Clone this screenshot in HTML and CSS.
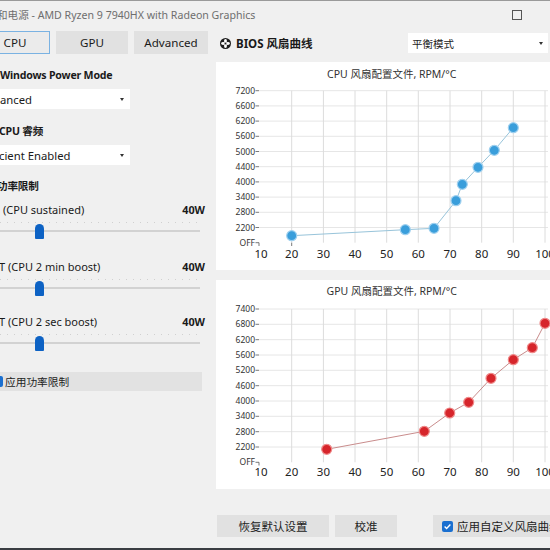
FILE: index.html
```
<!DOCTYPE html>
<html lang="zh">
<head>
<meta charset="utf-8">
<title>Fan</title>
<link rel="stylesheet" href="styles.css">
</head>
<body>
<div class="titlebar">
  <span class="title-text">和电源 - AMD Ryzen 9 7940HX with Radeon Graphics</span>
  <span class="max-icon"></span>
</div>
<div class="main">
  <div class="left">
    <div class="tabs">
      <div class="tab tab-cpu">CPU</div>
      <div class="tab tab-gpu">GPU</div>
      <div class="tab tab-adv">Advanced</div>
    </div>
    <div class="section-title st1">Windows Power Mode</div>
    <div class="select sel1"><span>anced</span><i class="caret"></i></div>
    <div class="section-title st2">CPU 睿频</div>
    <div class="select sel2"><span>cient Enabled</span><i class="caret"></i></div>
    <div class="section-title st3">功率限制</div>
    <div class="limit l1"><span class="lname">(CPU sustained)</span><span class="lval">40W</span></div>
    <div class="slider"><div class="ticks"></div><div class="track"></div><div class="thumb"></div></div>
    <div class="limit l2"><span class="lname">T (CPU 2 min boost)</span><span class="lval">40W</span></div>
    <div class="slider"><div class="ticks"></div><div class="track"></div><div class="thumb"></div></div>
    <div class="limit l3"><span class="lname">T (CPU 2 sec boost)</span><span class="lval">40W</span></div>
    <div class="slider"><div class="ticks"></div><div class="track"></div><div class="thumb"></div></div>
    <div class="apply-row"><span class="cb cb-clip"></span><span>应用功率限制</span></div>
  </div>
  <div class="right">
    <div class="header">
      <svg class="fan-icon" width="11" height="11" viewBox="0 0 12 12">
        <circle cx="6" cy="6" r="6" fill="#1e1e1e"/>
        <g fill="#fff">
          <ellipse cx="6" cy="3.4" rx="1.6" ry="2.2"/>
          <ellipse cx="6" cy="8.6" rx="1.6" ry="2.2"/>
          <ellipse cx="3.4" cy="6" rx="2.2" ry="1.6"/>
          <ellipse cx="8.6" cy="6" rx="2.2" ry="1.6"/>
        </g>
        <circle cx="6" cy="6" r="1.1" fill="#1e1e1e"/>
      </svg>
      <span class="bios-title">BIOS 风扇曲线</span>
      <div class="select mode-select"><span>平衡模式</span><i class="caret"></i></div>
    </div>
    <div class="panel panel-cpu">
      <svg class="chart" width="334" height="208" viewBox="216 62 334 208">
        <text class="ctitle" x="391.7" y="78" text-anchor="middle">CPU 风扇配置文件, RPM/°C</text>
        <g class="hgrid">
          <line x1="259" x2="548" y1="90.7" y2="90.7"/>
          <line x1="259" x2="548" y1="105.9" y2="105.9"/>
          <line x1="259" x2="548" y1="121.1" y2="121.1"/>
          <line x1="259" x2="548" y1="136.3" y2="136.3"/>
          <line x1="259" x2="548" y1="151.5" y2="151.5"/>
          <line x1="259" x2="548" y1="166.7" y2="166.7"/>
          <line x1="259" x2="548" y1="181.9" y2="181.9"/>
          <line x1="259" x2="548" y1="197.1" y2="197.1"/>
          <line x1="259" x2="548" y1="212.3" y2="212.3"/>
          <line x1="259" x2="548" y1="227.5" y2="227.5"/>
        </g>
        <g class="vgrid">
          <line x1="291.7" x2="291.7" y1="90.7" y2="242.7"/>
          <line x1="323.4" x2="323.4" y1="90.7" y2="242.7"/>
          <line x1="355" x2="355" y1="90.7" y2="242.7"/>
          <line x1="386.7" x2="386.7" y1="90.7" y2="242.7"/>
          <line x1="418.3" x2="418.3" y1="90.7" y2="242.7"/>
          <line x1="450" x2="450" y1="90.7" y2="242.7"/>
          <line x1="481.7" x2="481.7" y1="90.7" y2="242.7"/>
          <line x1="513.3" x2="513.3" y1="90.7" y2="242.7"/>
          <line x1="545" x2="545" y1="90.7" y2="242.7"/>
        </g>
        <g class="ticks-y">
          <line x1="255.5" x2="259" y1="90.7" y2="90.7"/>
          <line x1="255.5" x2="259" y1="105.9" y2="105.9"/>
          <line x1="255.5" x2="259" y1="121.1" y2="121.1"/>
          <line x1="255.5" x2="259" y1="136.3" y2="136.3"/>
          <line x1="255.5" x2="259" y1="151.5" y2="151.5"/>
          <line x1="255.5" x2="259" y1="166.7" y2="166.7"/>
          <line x1="255.5" x2="259" y1="181.9" y2="181.9"/>
          <line x1="255.5" x2="259" y1="197.1" y2="197.1"/>
          <line x1="255.5" x2="259" y1="212.3" y2="212.3"/>
          <line x1="255.5" x2="259" y1="227.5" y2="227.5"/>
          <line x1="255.5" x2="259" y1="242.7" y2="242.7"/>
          <line x1="259" x2="259" y1="242.7" y2="246"/>
          <line x1="291.7" x2="291.7" y1="242.7" y2="246"/>
        </g>
        <g class="ylab" text-anchor="end">
          <text x="255" y="93.7">7200</text>
          <text x="255" y="108.9">6600</text>
          <text x="255" y="124.1">6200</text>
          <text x="255" y="139.3">5600</text>
          <text x="255" y="154.5">5000</text>
          <text x="255" y="169.7">4400</text>
          <text x="255" y="184.9">4000</text>
          <text x="255" y="200.1">3400</text>
          <text x="255" y="215.3">2800</text>
          <text x="255" y="230.5">2200</text>
          <text x="255" y="245.7">OFF</text>
        </g>
        <g class="xlab" text-anchor="middle">
          <text x="261" y="257.5">10</text>
          <text x="291.7" y="257.5">20</text>
          <text x="323.4" y="257.5">30</text>
          <text x="355" y="257.5">40</text>
          <text x="386.7" y="257.5">50</text>
          <text x="418.3" y="257.5">60</text>
          <text x="450" y="257.5">70</text>
          <text x="481.7" y="257.5">80</text>
          <text x="513.3" y="257.5">90</text>
          <text x="545" y="257.5">100</text>
        </g>
        <polyline class="line-cpu" points="291.7,235.7 405.3,229.7 434,228.3 456,200.7 462.3,184.3 478,167.3 494.3,150.3 513.3,127.7"/>
        <g class="pt-cpu">
          <circle cx="291.7" cy="235.7" r="5"/>
          <circle cx="405.3" cy="229.7" r="5"/>
          <circle cx="434" cy="228.3" r="5"/>
          <circle cx="456" cy="200.7" r="5"/>
          <circle cx="462.3" cy="184.3" r="5"/>
          <circle cx="478" cy="167.3" r="5"/>
          <circle cx="494.3" cy="150.3" r="5"/>
          <circle cx="513.3" cy="127.7" r="5"/>
        </g>
      </svg>
    </div>
    <div class="panel panel-gpu">
      <svg class="chart" width="334" height="209" viewBox="216 280 334 209">
        <text class="ctitle" x="391.7" y="295" text-anchor="middle">GPU 风扇配置文件, RPM/°C</text>
        <g class="hgrid">
          <line x1="259" x2="548" y1="309" y2="309"/>
          <line x1="259" x2="548" y1="324.3" y2="324.3"/>
          <line x1="259" x2="548" y1="339.7" y2="339.7"/>
          <line x1="259" x2="548" y1="355" y2="355"/>
          <line x1="259" x2="548" y1="370.3" y2="370.3"/>
          <line x1="259" x2="548" y1="385.7" y2="385.7"/>
          <line x1="259" x2="548" y1="401" y2="401"/>
          <line x1="259" x2="548" y1="416.3" y2="416.3"/>
          <line x1="259" x2="548" y1="431.7" y2="431.7"/>
          <line x1="259" x2="548" y1="447" y2="447"/>
        </g>
        <g class="vgrid">
          <line x1="291.7" x2="291.7" y1="309" y2="462.3"/>
          <line x1="323.4" x2="323.4" y1="309" y2="462.3"/>
          <line x1="355" x2="355" y1="309" y2="462.3"/>
          <line x1="386.7" x2="386.7" y1="309" y2="462.3"/>
          <line x1="418.3" x2="418.3" y1="309" y2="462.3"/>
          <line x1="450" x2="450" y1="309" y2="462.3"/>
          <line x1="481.7" x2="481.7" y1="309" y2="462.3"/>
          <line x1="513.3" x2="513.3" y1="309" y2="462.3"/>
          <line x1="545" x2="545" y1="309" y2="462.3"/>
        </g>
        <g class="ticks-y">
          <line x1="255.5" x2="259" y1="309" y2="309"/>
          <line x1="255.5" x2="259" y1="324.3" y2="324.3"/>
          <line x1="255.5" x2="259" y1="339.7" y2="339.7"/>
          <line x1="255.5" x2="259" y1="355" y2="355"/>
          <line x1="255.5" x2="259" y1="370.3" y2="370.3"/>
          <line x1="255.5" x2="259" y1="385.7" y2="385.7"/>
          <line x1="255.5" x2="259" y1="401" y2="401"/>
          <line x1="255.5" x2="259" y1="416.3" y2="416.3"/>
          <line x1="255.5" x2="259" y1="431.7" y2="431.7"/>
          <line x1="255.5" x2="259" y1="447" y2="447"/>
          <line x1="255.5" x2="259" y1="462.3" y2="462.3"/>
          <line x1="259" x2="259" y1="462.3" y2="465.5"/>
        </g>
        <g class="ylab" text-anchor="end">
          <text x="255" y="312">7400</text>
          <text x="255" y="327.3">6800</text>
          <text x="255" y="342.7">6200</text>
          <text x="255" y="358">5600</text>
          <text x="255" y="373.3">5200</text>
          <text x="255" y="388.7">4600</text>
          <text x="255" y="404">4000</text>
          <text x="255" y="419.3">3400</text>
          <text x="255" y="434.7">2800</text>
          <text x="255" y="450">2200</text>
          <text x="255" y="465.3">OFF</text>
        </g>
        <g class="xlab" text-anchor="middle">
          <text x="261" y="476">10</text>
          <text x="291.7" y="476">20</text>
          <text x="323.4" y="476">30</text>
          <text x="355" y="476">40</text>
          <text x="386.7" y="476">50</text>
          <text x="418.3" y="476">60</text>
          <text x="450" y="476">70</text>
          <text x="481.7" y="476">80</text>
          <text x="513.3" y="476">90</text>
          <text x="545" y="476">100</text>
        </g>
        <polyline class="line-gpu" points="326.7,449.3 424.3,431.3 449.7,413 468.7,402.3 491,378.3 513.3,359.7 532.3,347.7 545,323.3"/>
        <g class="pt-gpu">
          <circle cx="326.7" cy="449.3" r="5"/>
          <circle cx="424.3" cy="431.3" r="5"/>
          <circle cx="449.7" cy="413" r="5"/>
          <circle cx="468.7" cy="402.3" r="5"/>
          <circle cx="491" cy="378.3" r="5"/>
          <circle cx="513.3" cy="359.7" r="5"/>
          <circle cx="532.3" cy="347.7" r="5"/>
          <circle cx="545" cy="323.3" r="5"/>
        </g>
      </svg>
    </div>
    <div class="actions">
      <div class="btn btn-reset">恢复默认设置</div>
      <div class="btn btn-cal">校准</div>
      <div class="btn btn-apply">
        <span class="cb"><svg width="11" height="11" viewBox="0 0 11 11"><path d="M2.6 5.6 L4.6 7.5 L8.4 3.6" fill="none" stroke="#fff" stroke-width="1.4"/></svg></span>
        <span>应用自定义风扇曲线</span>
      </div>
    </div>
  </div>
</div>
</body>
</html>
```
FILE: styles.css
```
* { box-sizing: border-box; }
html, body { margin: 0; padding: 0; }
body {
  width: 550px;
  height: 550px;
  overflow: hidden;
  background: #f0f0f0;
  font-family: "Noto Sans", "Noto Sans CJK SC", sans-serif;
  color: #1a1a1a;
  border-top: 1px solid #9a9a9a;
  border-bottom: 2px solid #3a3d42;
}
.titlebar {
  height: 27px;
  display: flex;
  align-items: center;
  justify-content: space-between;
  padding-right: 28px;
  font-size: 10.6px;
  color: #6e6e6e;
}
.title-text { margin-left: -3px; white-space: nowrap; }
.max-icon {
  width: 10px;
  height: 10px;
  border: 1px solid #555;
}
.main { display: flex; gap: 8px; }
.left {
  width: 208px;
  padding-top: 3px;
  display: flex;
  flex-direction: column;
  flex-shrink: 0;
}
.tabs { display: flex; gap: 6px; height: 23px; }
.tab {
  background: #e1e1e1;
  font-size: 11.6px;
  display: flex;
  align-items: center;
  justify-content: center;
  color: #1a1a1a;
}
.tab-cpu {
  width: 70px;
  margin-left: -20px;
  border: 1px solid #7ab2e2;
  background: #ebebeb;
}
.tab-gpu { width: 72px; }
.tab-adv { width: 74px; }
.section-title {
  font-weight: bold;
  font-size: 10.6px;
  letter-spacing: -0.2px;
  line-height: 16px;
  white-space: nowrap;
}
.st1 { margin-top: 13px; }
.st2 { margin-top: 14px; margin-left: -1px; }
.st3 { margin-top: 13px; margin-left: -3px; }
.select {
  height: 20px;
  width: 130px;
  background: #fff;
  display: flex;
  align-items: center;
  justify-content: space-between;
  font-size: 11.3px;
  padding-right: 6px;
  white-space: nowrap;
}
.sel1 { margin-top: 6px; }
.sel2 { margin-top: 6px; margin-left: -1px; width: 131px; }
.caret {
  width: 0;
  height: 0;
  border-left: 2.5px solid transparent;
  border-right: 2.5px solid transparent;
  border-top: 3px solid #333;
}
.limit {
  display: flex;
  justify-content: space-between;
  align-items: center;
  height: 16px;
  font-size: 11px;
  padding-right: 3px;
  white-space: nowrap;
}
.l1 { margin-top: 7px; padding-left: 3px; }
.l2 { margin-top: 16px; margin-left: -1px; }
.l3 { margin-top: 14px; margin-left: -1px; }
.lval { font-weight: bold; font-size: 10.8px; }
.slider {
  position: relative;
  height: 25px;
  width: 200px;
}
.ticks {
  position: absolute;
  left: 0;
  right: 0;
  top: 5px;
  height: 1px;
  background: repeating-linear-gradient(90deg, #d0d0d0 0 1px, transparent 1px 7px);
}
.track {
  position: absolute;
  left: 0;
  right: 0;
  top: 13px;
  height: 2px;
  background: #d2d2d2;
}
.thumb {
  position: absolute;
  left: 35px;
  top: 7px;
  width: 9px;
  height: 15px;
  background: #0d62c4;
  border-radius: 4.5px 4.5px 1px 1px;
}
.apply-row {
  margin-top: 18px;
  height: 19px;
  width: 202px;
  background: #e2e2e2;
  display: flex;
  align-items: center;
  gap: 2px;
  font-size: 10.7px;
  color: #222;
}
.cb {
  width: 11px;
  height: 11px;
  border-radius: 2px;
  background: #1a6fd0;
  display: inline-flex;
  flex-shrink: 0;
}
.cb-clip { margin-left: -8px; }
.right {
  width: 334px;
  padding-top: 3px;
  flex-shrink: 0;
}
.header {
  height: 24px;
  display: flex;
  align-items: center;
}
.fan-icon { margin-left: 4px; }
.bios-title {
  font-weight: bold;
  font-size: 11.5px;
  margin-left: 5px;
  white-space: nowrap;
}
.mode-select {
  margin-left: auto;
  margin-right: 2px;
  width: 140px;
  padding-left: 4px;
  padding-right: 5px;
  font-size: 10.5px;
}
.panel { background: #fff; }
.panel-cpu { margin-top: 7px; height: 208px; }
.panel-gpu { margin-top: 10px; height: 209px; }
.chart { display: block; }
.ctitle { font-size: 10.5px; fill: #333; }
.hgrid line { stroke: #e6e6e6; stroke-width: 1; }
.vgrid line { stroke: #dcdcdc; stroke-width: 1; }
.ticks-y line { stroke: #555; stroke-width: 0.8; }
.ylab text { font-size: 8.5px; fill: #333; }
.xlab text { font-size: 11.5px; fill: #222; }
.line-cpu { fill: none; stroke: #98c4da; stroke-width: 1; }
.line-gpu { fill: none; stroke: #c98c8c; stroke-width: 1; }
.pt-cpu circle { fill: #3a9edb; stroke: #9fd0ef; stroke-width: 1.2; }
.pt-gpu circle { fill: #d6252b; stroke: #ef8a8a; stroke-width: 1.2; }
.actions {
  display: flex;
  margin-top: 26px;
  height: 22px;
}
.btn {
  background: #e1e1e1;
  font-size: 11.5px;
  display: flex;
  align-items: center;
  justify-content: center;
  white-space: nowrap;
  color: #222;
}
.btn-reset { width: 112px; margin-left: 1px; }
.btn-cal { width: 62px; margin-left: 6px; }
.btn-apply {
  margin-left: 36px;
  flex: 1;
  justify-content: flex-start;
  padding-left: 9px;
  gap: 4px;
  overflow: hidden;
}
```
